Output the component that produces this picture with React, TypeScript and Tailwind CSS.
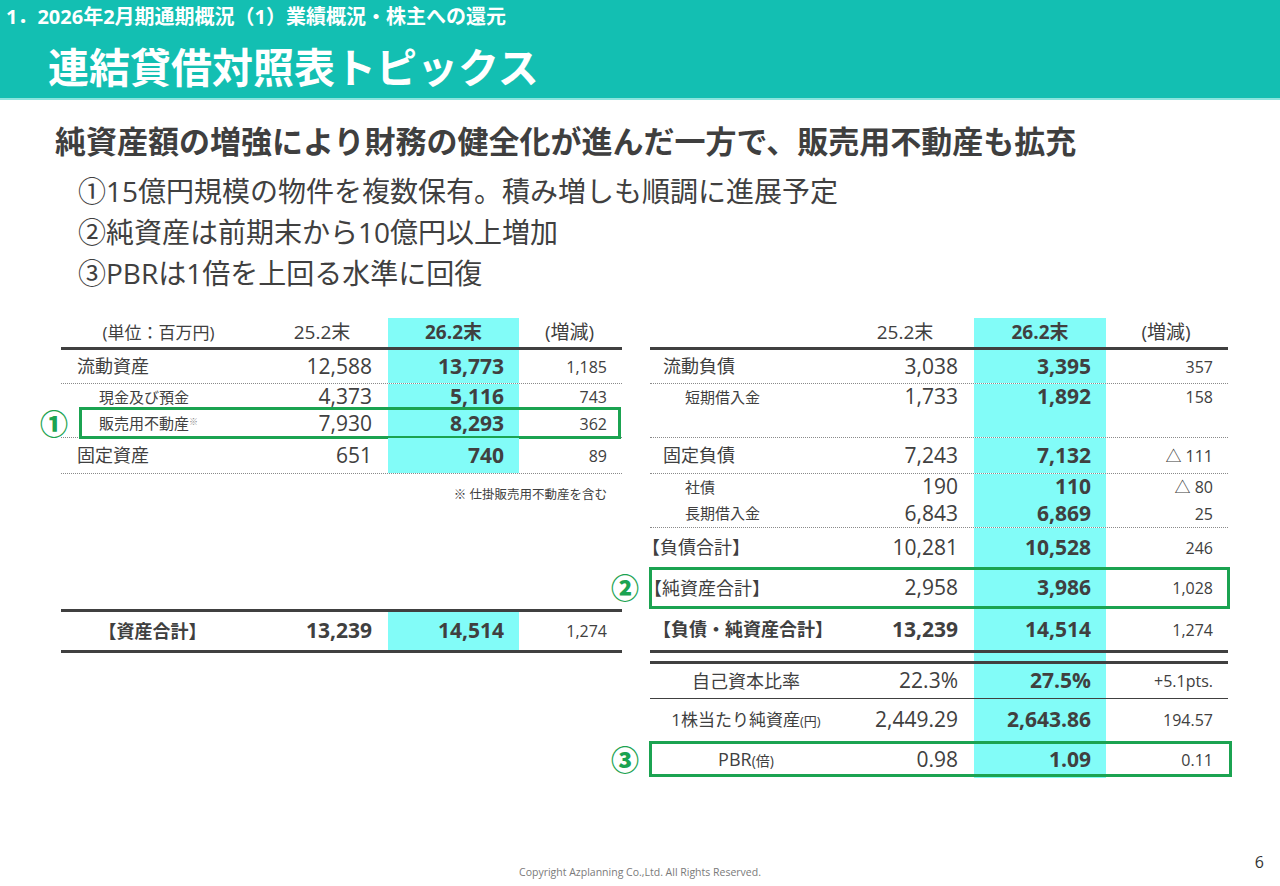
import React from 'react';
import { clsx } from 'clsx';

type Cols = [string, string, string, string];

const LEFT: Cols = ['w-[201px]', 'w-[126px]', 'w-[131px]', 'w-[103px]'];
const RIGHT: Cols = ['w-[192px]', 'w-[132px]', 'w-[132px]', 'w-[122px]'];

interface RowProps {
  cols: Cols;
  h: string;
  label?: React.ReactNode;
  labelCls?: string;
  v1?: string;
  v2?: string;
  d?: string;
  strong?: boolean;
  line?: string;
  children?: React.ReactNode;
}

const Row: React.FC<RowProps> = ({ cols, h, label, labelCls, v1, v2, d, strong, line, children }) => (
  <div className={clsx('relative flex', h, line)}>
    <div className={clsx(cols[0], 'flex shrink-0 items-center', labelCls)}>{label}</div>
    <div className={clsx(cols[1], 'flex shrink-0 items-center justify-end pr-[16px] text-[21px]', strong && 'font-bold')}>{v1}</div>
    <div className={clsx(cols[2], 'flex shrink-0 items-center justify-end pr-[15px] text-[21px] font-bold bg-[#82fcf8]')}>{v2}</div>
    <div className={clsx(cols[3], 'flex shrink-0 items-center justify-end pr-[15px] text-[16px]')}>{d}</div>
    {children}
  </div>
);

const HeaderRow: React.FC<{ cols: Cols; first?: React.ReactNode }> = ({ cols, first }) => (
  <div className="flex h-[32px] border-b-[3px] border-[#404040] text-[19px]">
    <div className={clsx(cols[0], 'flex items-center justify-center pr-[6px] text-[17px]')}>{first}</div>
    <div className={clsx(cols[1], 'flex items-center justify-center pr-[6px]')}>25.2末</div>
    <div className={clsx(cols[2], 'flex items-center justify-center font-bold bg-[#82fcf8]')}>26.2末</div>
    <div className={clsx(cols[3], 'flex items-center justify-center pr-[2px]')}>(増減)</div>
  </div>
);

const Marker: React.FC<{ n: string; box: string; mark: string }> = ({ n, box, mark }) => (
  <>
    <div className={clsx('pointer-events-none absolute border-[3px] border-[#1ba351]', box)} />
    <div className={clsx('absolute flex items-center text-[28px] font-black leading-none text-[#1ba351]', mark)}>{n}</div>
  </>
);

const dotted = 'border-b border-dotted border-[#8a8a8a]';
const main = 'pl-[16px] text-[18px]';
const sub = 'pl-[38px] text-[15px]';

function LeftTable() {
  return (
    <div className="flex w-[561px] flex-col">
      <HeaderRow cols={LEFT} first="(単位：百万円)" />
      <Row cols={LEFT} h="h-[34px]" line={dotted} label="流動資産" labelCls={main} v1="12,588" v2="13,773" d="1,185" />
      <Row cols={LEFT} h="h-[26px]" label="現金及び預金" labelCls={sub} v1="4,373" v2="5,116" d="743" />
      <Row
        cols={LEFT}
        h="h-[28px]"
        line={dotted}
        label={
          <span>
            販売用不動産<sup className="text-[9px] text-[#888]">※</sup>
          </span>
        }
        labelCls={sub}
        v1="7,930"
        v2="8,293"
        d="362"
      >
        <Marker n="①" box="left-[18px] right-[1px] top-[-3px] bottom-[-2px]" mark="left-[-21px] top-0 bottom-0" />
      </Row>
      <Row cols={LEFT} h="h-[36px]" line={dotted} label="固定資産" labelCls={main} v1="651" v2="740" d="89" />
      <div className="flex h-[42px] items-center justify-end pr-[15px] text-[12.5px]">※ 仕掛販売用不動産を含む</div>
      <div className="h-[93px]" />
      <Row
        cols={LEFT}
        h="h-[44px]"
        line="border-y-[3px] border-[#404040]"
        label="【資産合計】"
        labelCls="justify-center pr-[18px] text-[18px] font-bold"
        v1="13,239"
        v2="14,514"
        d="1,274"
        strong
      />
    </div>
  );
}

function RightTable() {
  const rmain = 'pl-[13px] text-[18px]';
  const rsub = 'pl-[35px] text-[15px]';
  const center = 'justify-center text-[18px]';
  return (
    <div className="flex w-[578px] flex-col">
      <HeaderRow cols={RIGHT} />
      <Row cols={RIGHT} h="h-[34px]" line={dotted} label="流動負債" labelCls={rmain} v1="3,038" v2="3,395" d="357" />
      <Row cols={RIGHT} h="h-[26px]" label="短期借入金" labelCls={rsub} v1="1,733" v2="1,892" d="158" />
      <Row cols={RIGHT} h="h-[28px]" line={dotted} />
      <Row cols={RIGHT} h="h-[36px]" line={dotted} label="固定負債" labelCls={rmain} v1="7,243" v2="7,132" d="△ 111" />
      <Row cols={RIGHT} h="h-[26px]" label="社債" labelCls={rsub} v1="190" v2="110" d="△ 80" />
      <Row cols={RIGHT} h="h-[28px]" line={dotted} label="長期借入金" labelCls={rsub} v1="6,843" v2="6,869" d="25" />
      <Row
        cols={RIGHT}
        h="h-[39px]"
        label={<span className="-ml-[8px]">【負債合計】</span>}
        labelCls="text-[18px]"
        v1="10,281"
        v2="10,528"
        d="246"
      />
      <Row
        cols={RIGHT}
        h="h-[42px]"
        label={<span className="-ml-[6px]">【純資産合計】</span>}
        labelCls="text-[18px]"
        v1="2,958"
        v2="3,986"
        d="1,028"
      >
        <Marker n="②" box="left-[-1px] right-[-2px] top-0 bottom-0" mark="left-[-39px] top-0 bottom-0" />
      </Row>
      <Row
        cols={RIGHT}
        h="h-[44px]"
        line="border-b-[3px] border-[#404040]"
        label="【負債・純資産合計】"
        labelCls="justify-center pr-[6px] text-[18px] font-bold"
        v1="13,239"
        v2="14,514"
        d="1,274"
        strong
      />
      <Row cols={RIGHT} h="h-[8px]" />
      <Row
        cols={RIGHT}
        h="h-[38px]"
        line="border-t-[3px] border-b border-[#404040]"
        label="自己資本比率"
        labelCls={center}
        v1="22.3%"
        v2="27.5%"
        d="+5.1pts."
      />
      <Row
        cols={RIGHT}
        h="h-[42px]"
        label={
          <span className="text-[17px]">
            1株当たり純資産<span className="text-[13px]">(円)</span>
          </span>
        }
        labelCls={center}
        v1="2,449.29"
        v2="2,643.86"
        d="194.57"
      />
      <Row
        cols={RIGHT}
        h="h-[37px]"
        label={
          <span>
            PBR<span className="text-[14px]">(倍)</span>
          </span>
        }
        labelCls={center}
        v1="0.98"
        v2="1.09"
        d="0.11"
      >
        <Marker n="③" box="left-[-1px] right-[-4px] top-0 bottom-[1px]" mark="left-[-39px] top-0 bottom-0" />
      </Row>
    </div>
  );
}

export default function App() {
  return (
    <div className="flex h-[886px] w-[1280px] flex-col overflow-hidden bg-white font-['Open_Sans','Noto_Sans_CJK_JP',sans-serif] text-[#404040]">
      <header className="flex h-[100px] flex-col">
        <div className="flex h-[98px] flex-col bg-[#13bfb2] pl-[6px] text-white">
          <div className="mt-[5px] text-[20px] font-bold leading-[24px]">1．2026年2月期通期概況（1）業績概況・株主への還元</div>
          <div className="ml-[42px] mt-[13px] text-[41px] font-bold leading-[50px]">連結貸借対照表トピックス</div>
        </div>
        <div className="h-[2px] bg-[#8be5de]" />
      </header>

      <h1 className="ml-[55px] mt-[21px] text-[31px] font-bold leading-[40px] text-[#3f3f3f]">
        純資産額の増強により財務の健全化が進んだ一方で、販売用不動産も拡充
      </h1>

      <div className="ml-[78px] mt-[10px] text-[28px] leading-[41px]">
        <p>①15億円規模の物件を複数保有。積み増しも順調に進展予定</p>
        <p>②純資産は前期末から10億円以上増加</p>
        <p>③PBRは1倍を上回る水準に回復</p>
      </div>

      <div className="ml-[61px] mt-[24px] flex gap-[28px]">
        <LeftTable />
        <RightTable />
      </div>

      <footer className="mt-auto grid h-[36px] grid-cols-[1fr_auto_1fr]">
        <div />
        <div className="self-end pb-[5px] text-[10.5px] text-[#7a7a7a]">Copyright Azplanning Co.,Ltd. All Rights Reserved.</div>
        <div className="flex justify-end pr-[16px] text-[16px] leading-[24px] text-[#333]">6</div>
      </footer>
    </div>
  );
}
